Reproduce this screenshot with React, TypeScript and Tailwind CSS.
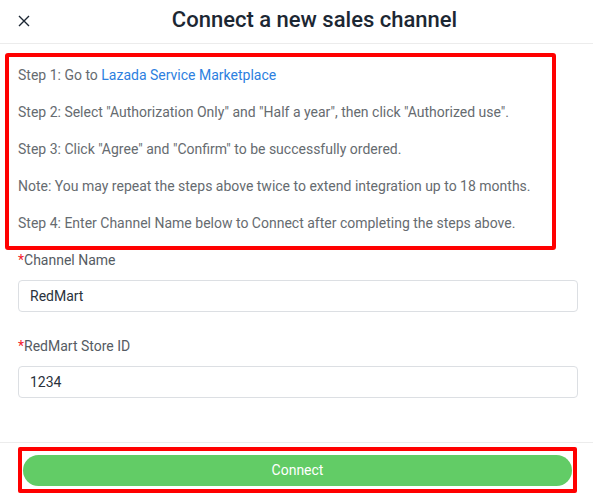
import React from "react";

const font = { fontFamily: "Roboto, 'Noto Sans', Arial, sans-serif" };

function Field({ label, value }: { label: string; value: string }) {
  return (
    <div className="flex flex-col">
      <div className="text-[14px] leading-[20px] text-[#555b63]">
        <span className="text-[#f5222d]">*</span>
        {label}
      </div>
      <div className="mt-[10px] h-[32px] rounded-[4px] border border-[#dcdfe3] flex items-center px-[11px] text-[14px] text-[#2a323c]">
        {value}
      </div>
    </div>
  );
}

export default function App() {
  return (
    <div className="w-[593px] h-[498px] bg-white flex flex-col overflow-hidden" style={font}>
      <div className="relative h-[44px] shrink-0 border-b border-[#ececec] flex items-center justify-center pl-[36px]">
        <button className="absolute left-[16px] top-[13px] w-[16px] h-[16px] flex items-center justify-center text-[#1c2733]">
          <svg width="14" height="14" viewBox="0 0 14 14" fill="none" stroke="currentColor" strokeWidth="1.4">
            <path d="M2 2 L12 12 M12 2 L2 12" />
          </svg>
        </button>
        <h1 className="text-[22px] font-medium text-[#1c2733] leading-[28px] mt-[-4px]">
          Connect a new sales channel
        </h1>
      </div>

      <div className="pt-[9px] pl-[5px]">
        <div className="w-[551px] border-[4px] border-[#ff0000] rounded-[3px] pl-[9px] pt-[8px] pb-[13px] flex flex-col gap-[17px] text-[14px] leading-[20px] text-[#666b70]">
          <p>
            Step 1: Go to <span className="text-[#2d7fe0]">Lazada Service Marketplace</span>
          </p>
          <p>Step 2: Select "Authorization Only" and "Half a year", then click "Authorized use".</p>
          <p>Step 3: Click "Agree" and "Confirm" to be successfully ordered.</p>
          <p>Note: You may repeat the steps above twice to extend integration up to 18 months.</p>
          <p>Step 4: Enter Channel Name below to Connect after completing the steps above.</p>
        </div>
      </div>

      <div className="pl-[18px] pr-[15px] flex flex-col gap-[24px]">
        <Field label="Channel Name" value="RedMart" />
        <Field label="RedMart Store ID" value="1234" />
      </div>

      <div className="mt-auto border-t border-[#ececec] h-[56px] shrink-0 pt-[4px] pl-[18px] pr-[16px]">
        <div className="h-[46px] border-[4px] border-[#ff0000] rounded-[2px] pl-[1px] pr-[1px] pt-[4px]">
          <button className="w-full h-[31px] rounded-full bg-[#62cc66] text-white text-[14px] flex items-center justify-center">
            Connect
          </button>
        </div>
      </div>
    </div>
  );
}
